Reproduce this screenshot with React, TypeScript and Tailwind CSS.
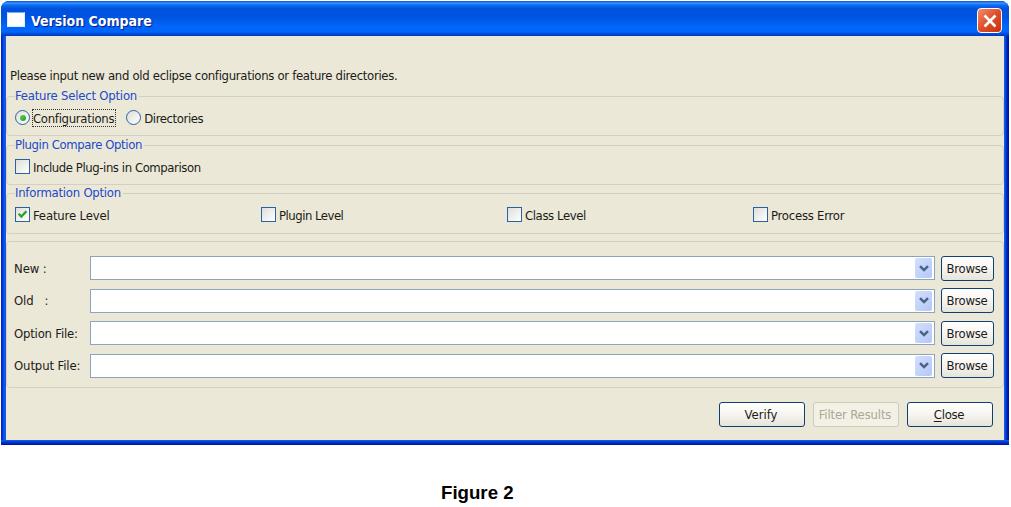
import type { ReactNode } from 'react';

function Label({ children, className = '' }: { children: ReactNode; className?: string }) {
  return <span className={`block whitespace-pre leading-4 ${className}`}>{children}</span>;
}

function Group({ title, tracking, className, children }: { title: string; tracking: string; className: string; children: ReactNode }) {
  return (
    <fieldset className={`min-w-0 rounded-[4px] border border-[#d2d0bf] pl-2 ${className}`}>
      <legend className={`h-4 pr-[2px] leading-4 text-[#2149c9] ${tracking}`}>{title}</legend>
      {children}
    </fieldset>
  );
}

function CheckBox({ label, tracking, checked = false }: { label: string; tracking: string; checked?: boolean }) {
  return (
    <label className="flex w-[246px] items-center gap-[3px]">
      <span className="flex size-[15px] shrink-0 items-center justify-center border border-[#2b62a0] bg-linear-to-br from-[#dedfdc] to-white">
        {checked && (
          <svg viewBox="0 0 9 9" className="size-[9px]" fill="none" stroke="#22a122" strokeWidth="2.2">
            <path d="M0.7 3.6 3.3 6.6 8.4 1.2" />
          </svg>
        )}
      </span>
      <Label className={`pt-[2px] ${tracking}`}>{label}</Label>
    </label>
  );
}

function Radio({ checked = false }: { checked?: boolean }) {
  return (
    <span className="flex size-[15px] shrink-0 items-center justify-center rounded-full border border-[#2b62a0] bg-linear-to-br from-[#dedfdc] to-white">
      {checked && <span className="size-[6px] rounded-full bg-linear-to-br from-[#5fd35b] to-[#1f9a1d]" />}
    </span>
  );
}

const buttonStyle =
  'flex items-center justify-center rounded-[3px] border border-[#123f72] bg-linear-to-b from-white via-[#f6f5f0] to-[#e6e3da]';

function FileRow({ label, tracking }: { label: string; tracking: string }) {
  return (
    <div className="flex h-6 items-center">
      <Label className={`w-[76px] pt-px ${tracking}`}>{label}</Label>
      <div className="flex h-6 w-[845px] items-center justify-end border border-[#8ba5bd] bg-white pr-[2px]">
        <span className="flex h-5 w-[17px] items-center justify-center rounded-[2px] bg-linear-to-br from-[#d3e0fd] to-[#b4c8f6]">
          <svg viewBox="0 0 10 7" className="h-[7px] w-[10px]" fill="none" stroke="#4a6188" strokeWidth="2.5">
            <path d="M1 1.2 5 5.1 9 1.2" />
          </svg>
        </span>
      </div>
      <button className={`${buttonStyle} ml-[6px] h-[25px] w-[53px] pt-px pr-px tracking-[-0.3px]`}>Browse</button>
    </div>
  );
}

export default function App() {
  return (
    <main className="h-[507px] w-[1011px] overflow-hidden bg-white pt-px pl-px font-['DejaVu_Sans_Condensed','DejaVu_Sans',sans-serif] text-[13px] text-[#1c1b19] [font-stretch:condensed]">
      <section className="flex h-[444px] w-[1008px] flex-col rounded-t-[8px] [background-image:linear-gradient(90deg,#0019cf_0px,#0840dc_2px,#1660e8_4px,#0855dd_5px,#0855dd_1003px,#1660e8_1004px,#0030d0_1005px,#00138c_1008px)]">
        <header className="flex h-[35px] shrink-0 items-center rounded-t-[8px] pr-[7px] pl-[6px] [background-image:linear-gradient(180deg,#0653cf_0%,#3b91ff_6%,#0b6bf4_12%,#0052db_22%,#0054e3_48%,#0067fc_75%,#0065fa_88%,#0040c8_97%,#0038bb_100%)]">
          <span className="mt-px mr-[6px] h-[15px] w-[18px] border border-[#e1edff] border-t-[#79aef8] bg-white" />
          <h1 className="mt-[4px] grow text-[14px] leading-5 font-bold text-white [text-shadow:1px_1px_1px_#0a1883]">Version Compare</h1>
          <button className="mt-[4px] flex size-[25px] items-center justify-center rounded-[4px] border border-white bg-linear-to-br from-[#ee8c6d] via-[#df4d26] to-[#c6310b]">
            <svg viewBox="0 0 14 14" className="size-[14px]" fill="none" stroke="white" strokeWidth="2.6">
              <path d="M1.5 1.5 12.5 12.5M12.5 1.5 1.5 12.5" />
            </svg>
          </button>
        </header>
        <div className="mr-[5px] ml-[5px] flex h-[404px] shrink-0 flex-col bg-[#ebe8d7]">
          <Label className="mt-[32px] h-[20px] pl-[4px] tracking-[-0.315px]">Please input new and old eclipse configurations or feature directories.</Label>
          <Group title="Feature Select Option" tracking="tracking-[-0.22px]" className="h-[48px]">
            <div className="flex h-[27px] items-center">
              <Radio checked />
              <span className="ml-[2px] border border-dotted border-[#333] pr-px tracking-[-0.3px]">
                <Label className="pt-px leading-[15px]">Configurations</Label>
              </span>
              <span className="w-[10px]" />
              <Radio />
              <Label className="ml-[3px] pt-[2px] tracking-[-0.4px]">Directories</Label>
            </div>
          </Group>
          <Group title="Plugin Compare Option" tracking="tracking-[-0.4px]" className="mt-px h-[48px]">
            <div className="flex h-[27px] items-center">
              <CheckBox label="Include Plug-ins in Comparison" tracking="tracking-[-0.43px]" />
            </div>
          </Group>
          <Group title="Information Option" tracking="tracking-[-0.25px]" className="h-[49px]">
            <div className="flex h-[27px] items-center">
              <CheckBox label="Feature Level" tracking="tracking-[-0.16px]" checked />
              <CheckBox label="Plugin Level" tracking="tracking-[-0.5px]" />
              <CheckBox label="Class Level" tracking="tracking-[-0.4px]" />
              <CheckBox label="Process Error" tracking="tracking-[-0.25px]" />
            </div>
          </Group>
          <div className="mt-[7px] flex h-[147px] flex-col gap-[8.5px] rounded-[4px] border border-[#d2d0bf] pt-[14px] pl-[7px]">
            <FileRow label="New :" tracking="tracking-[-0.1px]" />
            <FileRow label="Old   :" tracking="tracking-[-0.1px]" />
            <FileRow label="Option File:" tracking="tracking-[-0.2px]" />
            <FileRow label="Output File:" tracking="tracking-[-0.12px]" />
          </div>
          <div className="mt-[14px] flex justify-end gap-[8px] pr-[11px]">
            <button className={`${buttonStyle} h-[25px] w-[86px] pr-[2px] tracking-[0px]`}>Verify</button>
            <button disabled className="flex h-[25px] w-[86px] items-center justify-center rounded-[3px] border border-[#cdcbb9] bg-[#f3f1e6] pr-[2px] tracking-[-0.15px] text-[#aaa895]">Filter Results</button>
            <button className={`${buttonStyle} h-[25px] w-[86px] pr-[2px] tracking-[-0.3px]`}>
              <span><span className="underline underline-offset-2">C</span>lose</span>
            </button>
          </div>
        </div>
        <div className="grow bg-linear-to-b from-[#1660e8] via-[#0030d0] to-[#00138c]" />
      </section>
      <p className="mt-[37px] ml-[440px] font-['Liberation_Sans',Arial,sans-serif] text-[18.67px] leading-[22px] font-bold text-black">Figure 2</p>
    </main>
  );
}
